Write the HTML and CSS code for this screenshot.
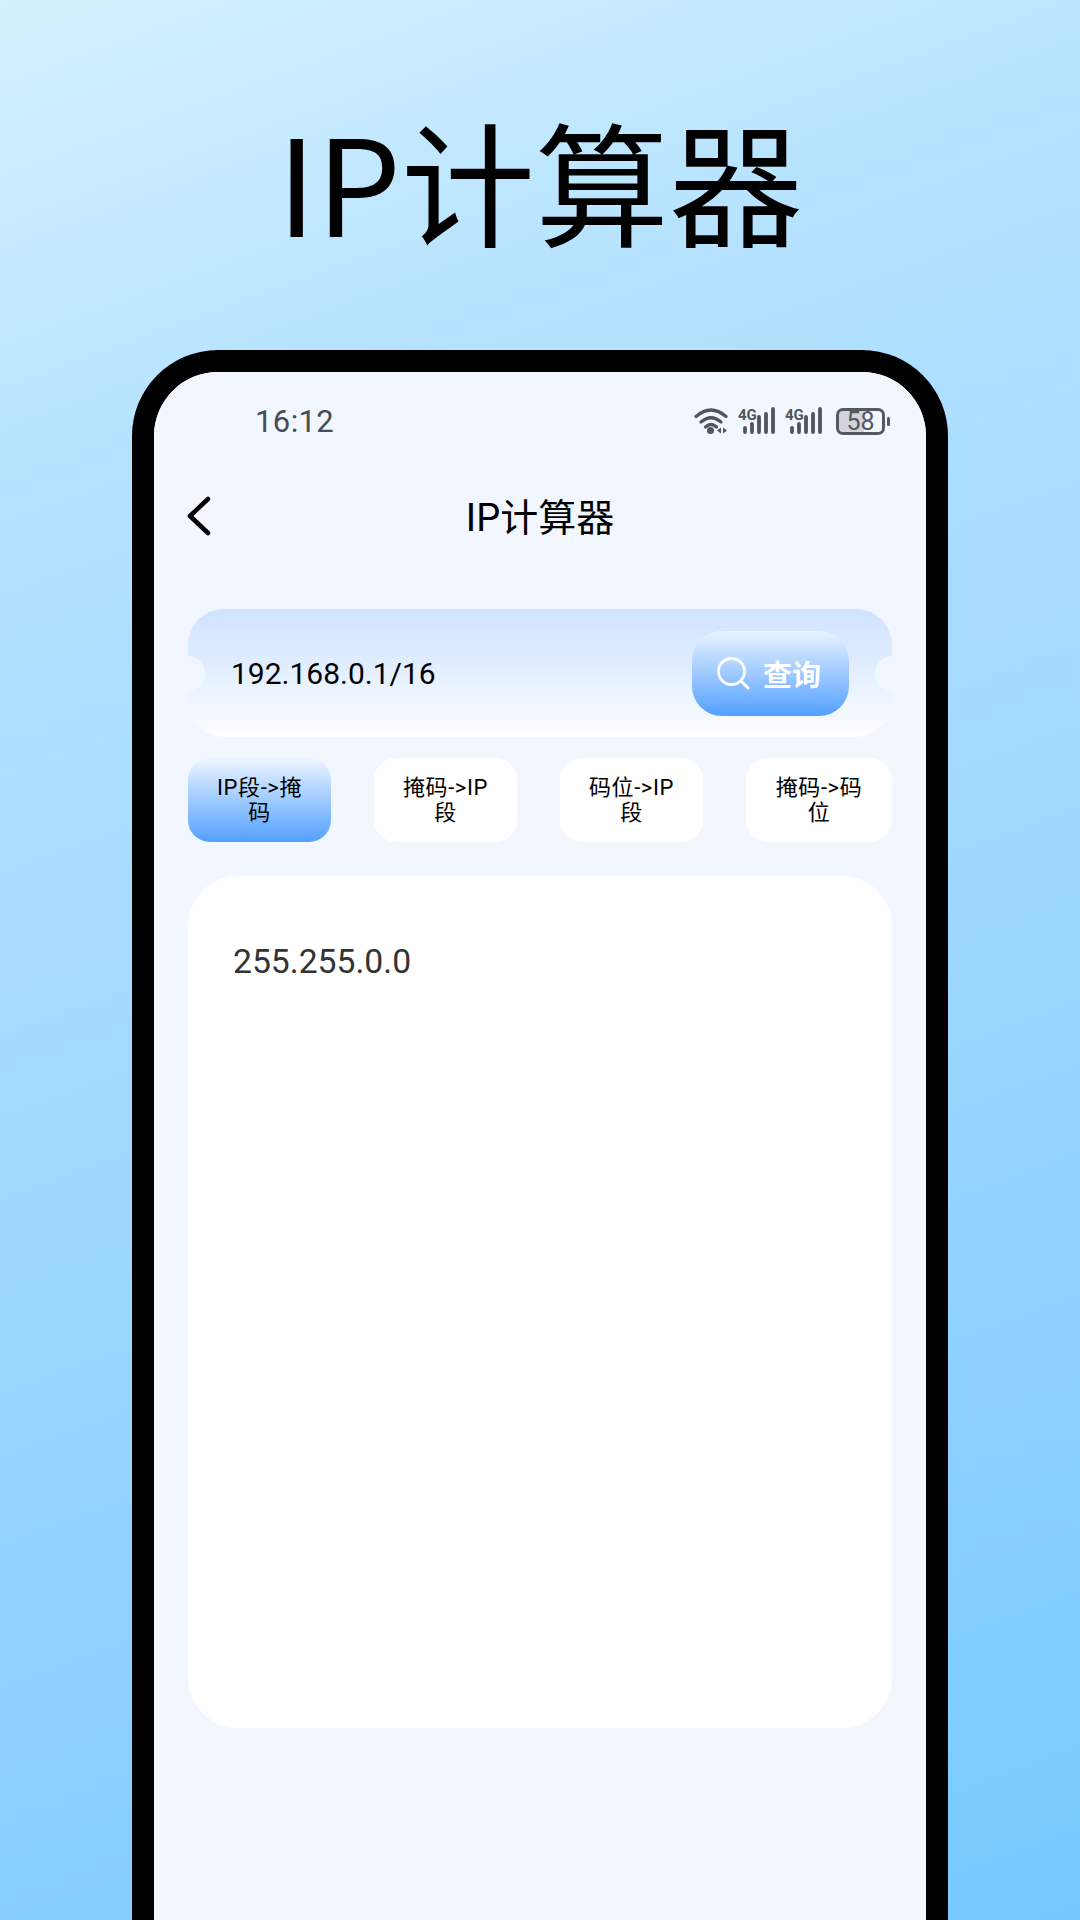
FILE: index.html
```html
<!DOCTYPE html>
<html lang="zh-CN">
<head>
<meta charset="utf-8">
<title>IP计算器</title>
<link rel="stylesheet" href="styles.css">
</head>
<body>
<main class="page">
  <h1 class="headline">IP计算器</h1>
  <section class="phone">
    <div class="screen">
      <div class="status">
        <span class="time">16:12</span>
        <div class="status-icons">
          <svg class="wifi" width="34" height="28" viewBox="0 0 34 28">
            <path d="M2 9.5Q17-3.5 32 9.5M7 15Q17 6.5 27 15M11.500 20Q17 15 22.500 20" fill="none" stroke="#50555c" stroke-width="3.200" stroke-linecap="round"/>
            <circle cx="16.500" cy="23.500" r="3.500" fill="#50555c"/>
            <path d="M27 20.500v6l-4-3zM29 20.500v6l4-3z" fill="#50555c"/>
          </svg>
          <svg class="signal" width="38" height="28" viewBox="0 0 38 28">
            <text x="0" y="13" class="sig-text">4G</text>
            <path d="M7 21v4M14 17v8M21 10v15M28 7v18M35 2v23" fill="none" stroke="#50555c" stroke-width="3.800" stroke-linecap="round"/>
          </svg>
          <svg class="signal" width="38" height="28" viewBox="0 0 38 28">
            <text x="0" y="13" class="sig-text">4G</text>
            <path d="M7 21v4M14 17v8M21 10v15M28 7v18M35 2v23" fill="none" stroke="#50555c" stroke-width="3.800" stroke-linecap="round"/>
          </svg>
          <div class="battery">
            <span class="battery-body">58</span>
            <span class="battery-tip"></span>
          </div>
        </div>
      </div>

      <header class="nav">
        <svg class="back" width="24" height="40" viewBox="0 0 24 40">
          <path d="M21 3 3 20l18 17" fill="none" stroke="#000" stroke-width="4.500" stroke-linecap="round" stroke-linejoin="round"/>
        </svg>
        <h2 class="nav-title">IP计算器</h2>
        <span class="nav-spacer"></span>
      </header>

      <div class="query">
        <span class="query-value">192.168.0.1/16</span>
        <button class="query-btn" type="button">
          <svg width="33" height="33" viewBox="0 0 33 33">
            <circle cx="14.500" cy="14.500" r="13" fill="none" stroke="#fff" stroke-width="2.800"/>
            <path d="M24 24l7 7" fill="none" stroke="#fff" stroke-width="3" stroke-linecap="round"/>
          </svg>
          <span>查询</span>
        </button>
      </div>

      <nav class="tabs">
        <button class="tab tab-active" type="button">IP段-&gt;掩<br>码</button>
        <button class="tab" type="button">掩码-&gt;IP<br>段</button>
        <button class="tab" type="button">码位-&gt;IP<br>段</button>
        <button class="tab tab-wide" type="button">掩码-&gt;码<br>位</button>
      </nav>

      <article class="result">255.255.0.0</article>
    </div>
  </section>
</main>
</body>
</html>
```

FILE: styles.css
```css
* { box-sizing: border-box; }

html, body {
  margin: 0;
  padding: 0;
}

body {
  width: 1080px;
  height: 1920px;
  overflow: hidden;
  font-family: Roboto, "Noto Sans CJK SC", sans-serif;
}

.page {
  width: 1080px;
  height: 1920px;
  overflow: hidden;
  display: flex;
  flex-direction: column;
  align-items: center;
  background: linear-gradient(160deg, #d4f1ff 0%, #b5e2ff 22%, #9ad6ff 60%, #76c9ff 100%);
}

.headline {
  flex: none;
  margin: 0;
  height: 350px;
  padding-top: 84px;
  font-family: "Noto Sans CJK SC", sans-serif;
  font-size: 134px;
  line-height: 190px;
  font-weight: 400;
  color: #000;
  white-space: nowrap;
}

.phone {
  flex: none;
  width: 816px;
  height: 1570px;
  border: 22px solid #000;
  border-bottom: 0;
  border-radius: 86px 86px 0 0;
  background: #f1f6ff;
}

.screen {
  height: 100%;
  padding: 0 34px;
  border-radius: 64px 64px 0 0;
  background: #f1f6ff;
}

.status {
  height: 98px;
  margin: 0 -34px;
  padding: 0 36px 0 101px;
  display: flex;
  align-items: center;
  justify-content: space-between;
}

.time {
  font-size: 31px;
  color: #484c53;
  letter-spacing: 0.4px;
}

.status-icons {
  display: flex;
  align-items: center;
}

.wifi { margin-right: 10px; }
.signal { margin-right: 9px; }
.signal + .battery { margin-left: 4px; }

.sig-text {
  font-family: Roboto, sans-serif;
  font-size: 15px;
  font-weight: 700;
  fill: #50555c;
}

.battery {
  display: flex;
  align-items: center;
  gap: 2px;
}

.battery-body {
  width: 49px;
  height: 27px;
  border: 3px solid #54585f;
  border-radius: 7px;
  background: linear-gradient(90deg, #d2d4da 58%, transparent 58%);
  font-size: 25px;
  line-height: 21px;
  text-align: center;
  color: #54585f;
}

.battery-tip {
  width: 3px;
  height: 9px;
  border-radius: 2px;
  background: #54585f;
}

.nav {
  height: 92px;
  display: grid;
  grid-template-columns: 1fr auto 1fr;
  align-items: center;
}

.back { margin-left: -1px; }

.nav-title {
  margin: -3px 0 0;
  font-size: 38px;
  font-weight: 400;
  color: #000;
}

.query {
  position: relative;
  height: 128px;
  margin-top: 47px;
  padding: 0 43px 0 43px;
  display: flex;
  align-items: center;
  justify-content: space-between;
  overflow: hidden;
  border-radius: 36px;
  background: linear-gradient(180deg, #cfe3ff 0%, #e2eeff 45%, #fdfeff 100%);
}

.query::before,
.query::after {
  content: "";
  position: absolute;
  top: 47px;
  width: 35px;
  height: 36px;
  border-radius: 50%;
  background: #f1f6ff;
}

.query::before { left: -18px; }
.query::after { right: -18px; }

.query-value {
  font-size: 30px;
  color: #000;
}

.query-btn {
  width: 157px;
  height: 85px;
  padding: 0 3px 0 0;
  display: flex;
  align-items: center;
  justify-content: center;
  gap: 13px;
  border: 0;
  border-radius: 30px;
  background: linear-gradient(180deg, #eaf3ff 0%, #52a0ff 100%);
  color: #fff;
  font-family: "Noto Sans CJK SC", sans-serif;
  font-size: 29px;
  font-weight: 700;
}

.tabs {
  margin-top: 21px;
  display: flex;
  justify-content: space-between;
}

.tab {
  width: 143px;
  height: 84px;
  padding: 0;
  border: 0;
  border-radius: 22px;
  background: #fff;
  color: #000;
  font-family: Roboto, "Noto Sans CJK SC", sans-serif;
  font-size: 22px;
  line-height: 25px;
  letter-spacing: 0.6px;
  text-align: center;
}

.tab-wide { width: 146px; }

.tab-active {
  background: linear-gradient(180deg, #eef5ff 0%, #52a0ff 100%);
}

.result {
  height: 852px;
  margin-top: 34px;
  padding: 62px 45px;
  border-radius: 50px;
  background: #fff;
  color: #333;
  font-size: 33.7px;
  line-height: 48px;
}
```
